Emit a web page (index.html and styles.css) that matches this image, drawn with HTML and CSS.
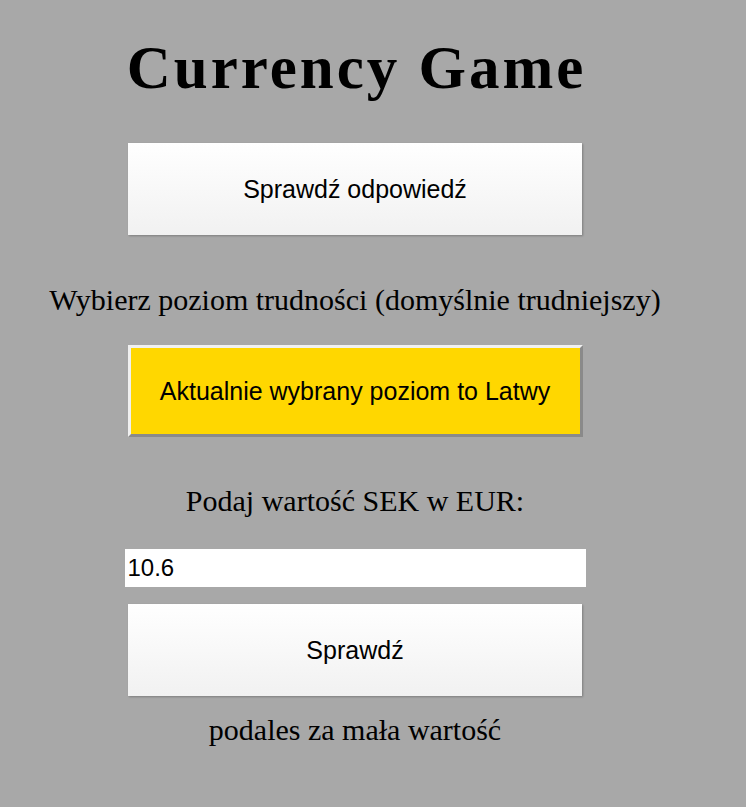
FILE: index.html
```html
<!DOCTYPE html>
<html lang="pl">
<head>
<meta charset="utf-8">
<title>Currency Game</title>
<link rel="stylesheet" href="styles.css">
</head>
<body>
<main class="game">
  <h1 class="title">Currency Game</h1>
  <button class="btn btn-plain btn-answer">Sprawdź odpowiedź</button>
  <p class="label label-level">Wybierz poziom trudności (domyślnie trudniejszy)</p>
  <button class="btn btn-level">Aktualnie wybrany poziom to Latwy</button>
  <p class="label label-value">Podaj wartość SEK w EUR:</p>
  <input class="value-input" type="text" value="10.6">
  <button class="btn btn-plain btn-check">Sprawdź</button>
  <p class="label label-result">podales za mała wartość</p>
</main>
</body>
</html>
```
FILE: styles.css
```css
html, body {
  margin: 0;
  padding: 0;
  background: #a8a8a8;
}
.game {
  width: 710px;
  display: flex;
  flex-direction: column;
  align-items: center;
  font-family: "Liberation Serif", "Times New Roman", serif;
  color: #000;
}
.title {
  margin: 30px 0 0;
  font-size: 61px;
  line-height: 76px;
  font-weight: bold;
  letter-spacing: 3px;
  padding-left: 3px;
}
.btn {
  width: 454px;
  height: 92px;
  font-family: "Liberation Sans", Arial, sans-serif;
  font-size: 25px;
  color: #000;
  cursor: pointer;
}
.btn-plain {
  border: none;
  background: linear-gradient(#ffffff, #f1f1f1);
  box-shadow: 1px 1px 2px rgba(0,0,0,0.25);
}
.btn-answer {
  margin-top: 37px;
}
.label {
  margin: 0;
  font-size: 30px;
  line-height: 34px;
}
.label-level {
  margin-top: 48px;
}
.btn-level {
  margin-top: 28px;
  width: 455px;
  height: 92px;
  background: #ffd700;
  border: 3px solid;
  border-color: #f0f0f0 #8a8a8a #8a8a8a #f0f0f0;
}
.label-value {
  margin-top: 47px;
}
.value-input {
  margin-top: 31px;
  width: 461px;
  height: 38px;
  box-sizing: border-box;
  border: none;
  outline: none;
  background: #fff;
  padding: 0 3px;
  font-family: "Liberation Sans", Arial, sans-serif;
  font-size: 24px;
  color: #000;
}
.btn-check {
  margin-top: 17px;
}
.label-result {
  margin-top: 17px;
}
```
